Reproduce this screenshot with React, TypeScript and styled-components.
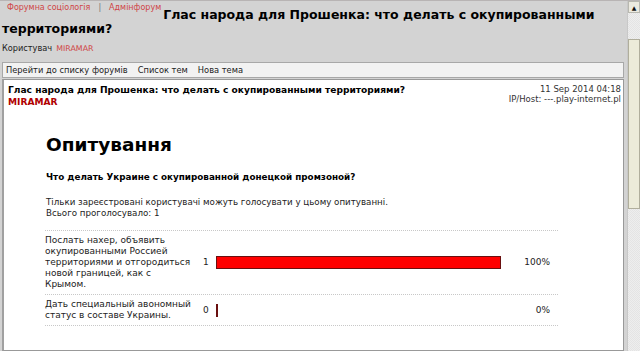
import React from "react";
import styled, { createGlobalStyle } from "styled-components";

const Global = createGlobalStyle`
  html, body { margin: 0; padding: 0; }
  body {
    background: #d3d3d3;
    font-family: "DejaVu Sans", Verdana, sans-serif;
    color: #111;
    overflow: hidden;
  }
`;

const Screen = styled.div`
  display: flex;
  width: 640px;
  height: 351px;
  overflow: hidden;
  background: #d3d3d3;
  border-top: 1px solid #b8b4b4;
  box-sizing: border-box;
`;

const Page = styled.div`
  flex: 1;
  padding: 0 2px 0 2px;
  min-width: 0;
`;

const Header = styled.div`
  padding-top: 7px;
  font-size: 12.5px;
  line-height: 14px;
`;

const NavLinks = styled.div`
  float: left;
  margin: -6px 2px 0 5px;
  font-size: 8px;
  line-height: 12px;
  color: #666;
`;

const NavLink = styled.a`
  color: #d04646;
  text-decoration: none;
`;

const NavSep = styled.span`
  margin: 0 8px;
  color: #777;
`;

const TopicTitle = styled.h2`
  display: inline;
  margin: 0;
  font-size: 12.5px;
  font-weight: bold;
  color: #000;
`;

const UserLine = styled.div`
  clear: both;
  margin-top: 6px;
  font-size: 8.2px;
  line-height: 12px;
  color: #222;
`;

const UserLink = styled.a`
  color: #d04646;
  text-decoration: none;
  margin-left: 4px;
  font-size: 7.9px;
`;

const Toolbar = styled.div`
  display: flex;
  gap: 10px;
  margin-top: 7px;
  height: 14px;
  padding-left: 3px;
  align-items: center;
  background: #f2f2f2;
  border: 1px solid #a8a8a8;
  font-size: 8.3px;
  color: #222;
`;

const ToolLink = styled.a`
  color: #222;
  text-decoration: none;
`;

const PostBox = styled.div`
  margin-top: 1px;
  height: 272px;
  box-sizing: border-box;
  background: #fff;
  border: 1px solid #999;
  border-left: 2px solid #a0a0a0;
  padding: 4px 2px 0 4px;
`;

const PostHead = styled.div`
  display: flex;
  justify-content: space-between;
  align-items: flex-start;
`;

const PostTitleCol = styled.div`
  font-size: 9.1px;
  line-height: 12px;
  font-weight: bold;
  color: #000;
`;

const Author = styled.div`
  color: #b00000;
`;

const PostMeta = styled.div`
  font-size: 8.5px;
  line-height: 9.5px;
  text-align: right;
  color: #333;
  padding-top: 1px;
`;

const Poll = styled.div`
  margin-left: 38px;
  width: 512px;
`;

const PollTitle = styled.h1`
  margin: 26px 0 0 0;
  font-size: 18.5px;
  line-height: 22px;
  font-weight: bold;
  color: #000;
`;

const Question = styled.div`
  margin-top: 15px;
  font-size: 8.8px;
  line-height: 12px;
  font-weight: bold;
  color: #000;
`;

const Note = styled.div`
  margin-top: 14px;
  font-size: 8.7px;
  line-height: 11px;
  color: #222;
`;

const Options = styled.div`
  margin: 11px 0 0 -1px;
  border-top: 1px dotted #c8c8c8;
`;

const OptionRow = styled.div`
  display: grid;
  grid-template-columns: 155px 16px 1fr 42px;
  align-items: center;
  padding: 4px 0;
  border-bottom: 1px dotted #c8c8c8;
  font-size: 9px;
  line-height: 11px;
  color: #222;
`;

const OptionText = styled.div`
  padding-right: 5px;
`;

const Count = styled.div`
  padding-left: 3px;
`;

const Bar = styled.div`
  height: 11px;
  background: #ff0000;
  border: 1px solid #6a1010;
`;

const Percent = styled.div`
  text-align: right;
  padding-right: 8px;
`;

const Scrollbar = styled.div`
  width: 12px;
  margin-left: 1px;
  display: flex;
  flex-direction: column;
  background: repeating-conic-gradient(#e4e4e4 0% 25%, #eeeeee 0% 50%) 0 0 / 2px 2px;
  border-left: 1px solid #c8c8c8;
`;

const ArrowButton = styled.div`
  height: 10px;
  display: flex;
  align-items: center;
  justify-content: center;
  background: #eceae0;
  border: 1px solid #b8b8b0;
  font-size: 6px;
  color: #111;
`;

const Track = styled.div<{ $h: number }>`
  height: ${(p) => p.$h}px;
`;

const Thumb = styled.div`
  height: 170px;
  background: #ecebd9;
  border: 1px solid #b0ae9c;
  box-sizing: border-box;
`;

const options = [
  {
    text: "Послать нахер, объявить окупированными Россией территориями и отгородиться новой границей, как с Крымом.",
    votes: 1,
    pct: 100,
  },
  {
    text: "Дать специальный авономный статус в составе Украины.",
    votes: 0,
    pct: 0,
  },
];

export default function App() {
  return (
    <>
      <Global />
      <Screen>
        <Page>
          <Header>
            <NavLinks>
              <NavLink href="#">Форумна соціологія</NavLink>
              <NavSep>|</NavSep>
              <NavLink href="#">Адмінфорум</NavLink>
            </NavLinks>
            <TopicTitle>
              Глас народа для Прошенка: что делать с окупированными территориями?
            </TopicTitle>
          </Header>
          <UserLine>
            Користувач<UserLink href="#">MIRAMAR</UserLink>
          </UserLine>
          <Toolbar>
            <ToolLink href="#">Перейти до списку форумів</ToolLink>
            <ToolLink href="#">Список тем</ToolLink>
            <ToolLink href="#">Нова тема</ToolLink>
          </Toolbar>
          <PostBox>
            <PostHead>
              <PostTitleCol>
                Глас народа для Прошенка: что делать с окупированными территориями?
                <Author>MIRAMAR</Author>
              </PostTitleCol>
              <PostMeta>
                11 Sep 2014 04:18
                <br />
                IP/Host: ---.play-internet.pl
              </PostMeta>
            </PostHead>
            <Poll>
              <PollTitle>Опитування</PollTitle>
              <Question>Что делать Украине с окупированной донецкой промзоной?</Question>
              <Note>
                Тільки зареєстровані користувачі можуть голосувати у цьому опитуванні.
                <br />
                Всього проголосувало: 1
              </Note>
              <Options>
                {options.map((o) => (
                  <OptionRow key={o.text}>
                    <OptionText>{o.text}</OptionText>
                    <Count>{o.votes}</Count>
                    <div>
                      <Bar style={{ width: `${(o.pct / 100) * 283}px` }} />
                    </div>
                    <Percent>{o.pct}%</Percent>
                  </OptionRow>
                ))}
              </Options>
            </Poll>
          </PostBox>
        </Page>
        <Scrollbar>
          <ArrowButton>▲</ArrowButton>
          <Track $h={26} />
          <Thumb />
        </Scrollbar>
      </Screen>
    </>
  );
}
